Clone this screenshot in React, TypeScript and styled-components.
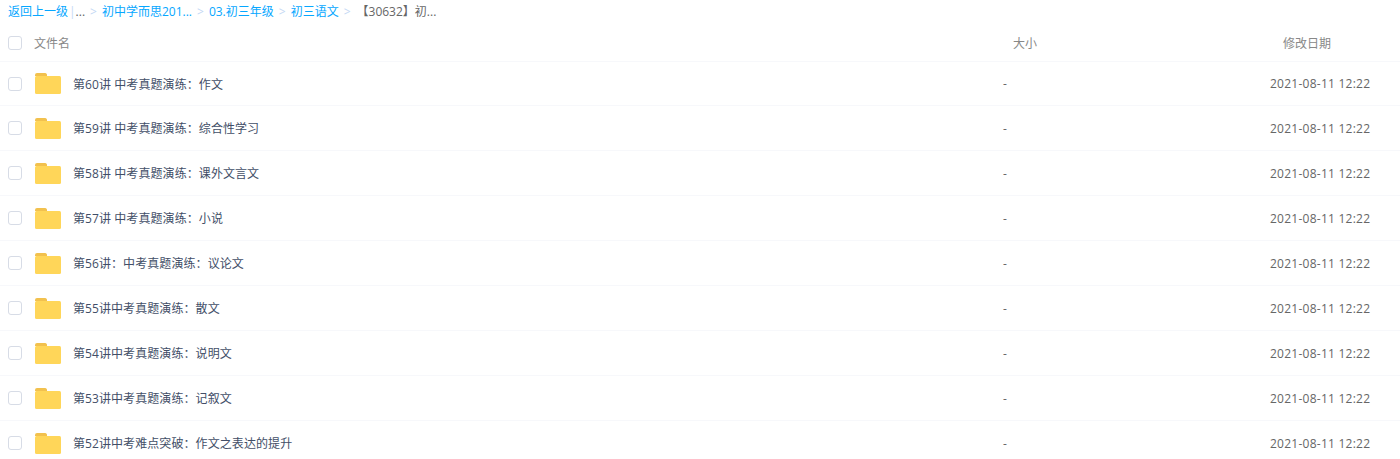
import React from 'react';
import styled, { createGlobalStyle } from 'styled-components';

const GlobalStyle = createGlobalStyle`
  html, body {
    margin: 0;
    padding: 0;
    background: #fff;
  }
  body {
    font-family: "Open Sans", "Noto Sans CJK SC", sans-serif;
    font-size: 12px;
    color: #424e67;
    overflow: hidden;
  }
`;

const Page = styled.div`
  width: 1400px;
  height: 459px;
  overflow: hidden;
`;

const Breadcrumb = styled.div`
  display: flex;
  align-items: center;
  height: 24px;
  padding-left: 8px;
  white-space: nowrap;
  line-height: 24px;
`;

const Crumb = styled.span`
  color: #06a7ff;
`;

const Divider = styled.span`
  color: #c4d8f4;
  margin-left: 1px;
`;

const Arrow = styled.span`
  color: #c4d8f4;
  margin: 0 5px;
`;

const Current = styled.span`
  color: #666;
  margin-left: 1px;
`;

const Dots = styled.span`
  color: #666;
`;

const Row = styled.div<{ $head?: boolean; $first?: boolean }>`
  display: grid;
  grid-template-columns: 27px 38px 930px 267px 1fr;
  align-items: center;
  box-sizing: border-box;
  height: ${({ $head, $first }) => ($head ? '38px' : $first ? '44px' : '45px')};
  padding-left: 8px;
  border-bottom: 1px solid #f7f8fb;
  color: ${({ $head }) => ($head ? '#888' : '#424e67')};
`;

const Check = styled.span`
  box-sizing: border-box;
  width: 14px;
  height: 14px;
  border: 1px solid #d7dce6;
  border-radius: 3px;
  background: #fff;
`;

const HeadName = styled.span`
  grid-column: 2 / 4;
  margin-left: -1px;
`;

const HeadSize = styled.span`
  padding-left: 10px;
`;

const HeadDate = styled.span`
  padding-left: 13px;
  white-space: nowrap;
`;

const Name = styled.span`
  white-space: nowrap;
  letter-spacing: 0.08px;
`;

const Size = styled.span`
  color: #666;
`;

const DateCell = styled.span`
  white-space: nowrap;
  color: #666;
  letter-spacing: 0.25px;
`;

const Folder = () => (
  <svg width="26" height="21" viewBox="0 0 26 21" style={{ display: 'block' }}>
    <path d="M0 2A2 2 0 0 1 2 0h8a2 2 0 0 1 2 1.5V3H0z" fill="#f2c14e" />
    <rect x="0" y="3" width="26" height="18" rx="1.5" fill="#ffd659" />
  </svg>
);

const files = [
  '第60讲 中考真题演练：作文',
  '第59讲 中考真题演练：综合性学习',
  '第58讲 中考真题演练：课外文言文',
  '第57讲 中考真题演练：小说',
  '第56讲：中考真题演练：议论文',
  '第55讲中考真题演练：散文',
  '第54讲中考真题演练：说明文',
  '第53讲中考真题演练：记叙文',
  '第52讲中考难点突破：作文之表达的提升',
];

export default function App() {
  return (
    <Page>
      <GlobalStyle />
      <Breadcrumb>
        <Crumb>返回上一级</Crumb>
        <Divider>|</Divider>
        <Dots>...</Dots>
        <Arrow>&gt;</Arrow>
        <Crumb>初中学而思201...</Crumb>
        <Arrow>&gt;</Arrow>
        <Crumb>03.初三年级</Crumb>
        <Arrow>&gt;</Arrow>
        <Crumb>初三语文</Crumb>
        <Arrow>&gt;</Arrow>
        <Current>【30632】初...</Current>
      </Breadcrumb>
      <Row $head>
        <Check />
        <HeadName>文件名</HeadName>
        <HeadSize>大小</HeadSize>
        <HeadDate>修改日期</HeadDate>
      </Row>
      {files.map((name, i) => (
        <Row key={name} $first={i === 0}>
          <Check />
          <Folder />
          <Name>{name}</Name>
          <Size>-</Size>
          <DateCell>2021-08-11 12:22</DateCell>
        </Row>
      ))}
    </Page>
  );
}
